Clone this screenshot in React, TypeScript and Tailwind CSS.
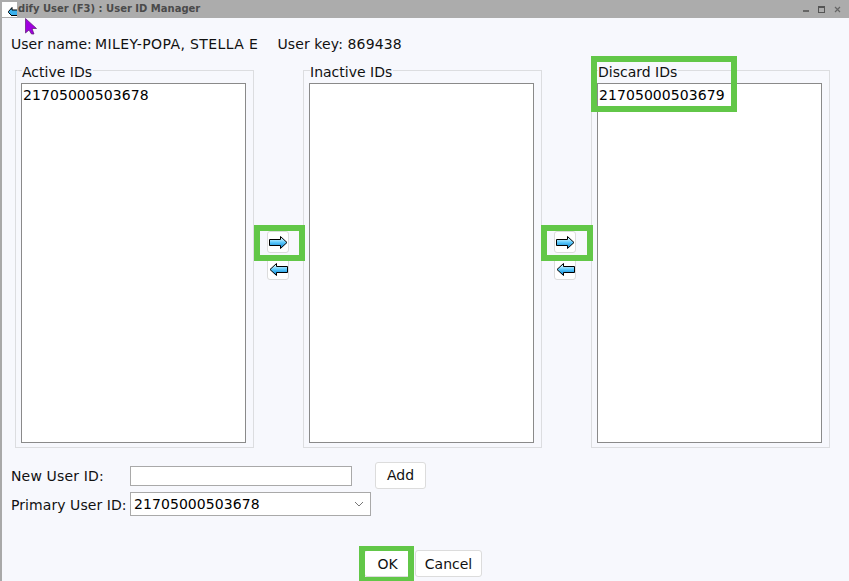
const font = "font-['DejaVu_Sans',sans-serif]";

function Arrow({ left, id }: { left?: boolean; id: string }) {
  return (
    <svg width="19" height="13" viewBox="0 0 19 13" className={left ? "-scale-x-100" : ""}>
      <defs>
        <linearGradient id={id} x1="0" y1="0" x2="0" y2="1">
          <stop offset="0.2" stopColor="#c4f0ff" />
          <stop offset="0.5" stopColor="#5cc8fb" />
          <stop offset="0.85" stopColor="#1a8fd8" />
        </linearGradient>
      </defs>
      <path d="M0.5 3.5H11.5V0.5L18 6.5L11.5 12.5V9.5H0.5Z" fill={`url(#${id})`} stroke="#000" strokeWidth="1" />
    </svg>
  );
}

function MoveButtons({ name, inset }: { name: string; inset: string }) {
  return (
    <div className={`w-[49px] flex flex-col items-start gap-[5px] pt-[167px] ${inset}`}>
      <button className="w-[22px] h-[22px] bg-white border border-[#dcdcdc] rounded-[3px] flex items-center justify-center">
        <Arrow id={`${name}-right`} />
      </button>
      <button className="w-[22px] h-[22px] bg-white border border-[#dcdcdc] rounded-[3px] flex items-center justify-center">
        <Arrow id={`${name}-left`} left />
      </button>
    </div>
  );
}

function IdPanel({ title, ids }: { title: string; ids: string[] }) {
  return (
    <fieldset className="w-[239px] h-[384px] border border-[#dcdde0] px-[5px] m-0 shrink-0">
      <legend className="ml-[1px] pr-[1px] text-[14px] leading-[17px] h-[13px] text-[#111]">{title}</legend>
      <div className="w-[225px] h-[360px] mt-[6px] bg-white border border-[#8a8a8a] px-[1px] pt-[2px] text-[14px] leading-[18px] text-black tracking-[0.07px]">
        {ids.map((id) => (
          <div key={id}>{id}</div>
        ))}
      </div>
    </fieldset>
  );
}

export default function App() {
  return (
    <div className={`${font} relative w-[849px] h-[581px] overflow-hidden flex flex-col bg-[#f7f8fd] text-[14px] text-[#111]`}>
      <div className="h-[18px] shrink-0 bg-[#acacac] flex items-center pl-[18px] pr-[8px]">
        <span className="text-[10px] font-bold text-[#4a4a4a] leading-[18px]">dify User (F3) : User ID Manager</span>
        <div className="ml-auto flex items-center gap-[9px] text-[#555]">
          <span className="w-[6px] h-[2px] bg-[#666] mt-[3px]" />
          <span className="w-[7px] h-[7px] border border-[#555] border-t-2" />
          <svg width="7" height="7" viewBox="0 0 7 7">
            <path d="M1 1L6 6M6 1L1 6" stroke="#666" strokeWidth="1.2" />
          </svg>
        </div>
      </div>

      <div className="flex-1 border-l-2 border-[#a9a9a9] flex flex-col">
        <div className="flex h-[46px] pl-[9px] pt-[17px] leading-[18px] shrink-0">
          <span className="w-[84px]">User name:</span>
          <span className="tracking-[0.4px]">MILEY-POPA, STELLA E</span>
          <span className="ml-[19px] tracking-[0.12px]">User key: 869438</span>
        </div>

        <div className="flex pl-[13px] shrink-0">
          <IdPanel title="Active IDs" ids={["21705000503678"]} />
          <MoveButtons name="a" inset="pl-[13px]" />
          <IdPanel title="Inactive IDs" ids={[]} />
          <MoveButtons name="b" inset="pl-[12px]" />
          <IdPanel title="Discard IDs" ids={["21705000503679"]} />
        </div>

        <div className="flex items-center pl-[9px] mt-[14px] h-[27px]">
          <label className="w-[119px] leading-[18px] tracking-[0.15px]">New User ID:</label>
          <div className="w-[222px] h-[20px] bg-white border border-[#a9a9a9]" />
          <button className="ml-[23px] w-[51px] h-[27px] bg-white border border-[#dcdcdc] rounded-[3px] text-[14px]">Add</button>
        </div>
        <div className="flex items-center pl-[9px] mt-[3px] h-[24px]">
          <label className="w-[119px] leading-[18px] pt-[1px] tracking-[0.07px]">Primary User ID:</label>
          <div className="w-[241px] h-[24px] bg-white border border-[#a9a9a9] flex items-center pl-[3px] pr-[6px] text-black tracking-[0.07px]">
            <span className="pt-[1px]">21705000503678</span>
            <svg className="ml-auto" width="10" height="6" viewBox="0 0 10 6">
              <path d="M1 1L5 5L9 1" fill="none" stroke="#777" strokeWidth="1" />
            </svg>
          </div>
        </div>

        <div className="flex pl-[362px] mt-[34px] gap-[4px]">
          <button className="w-[47px] h-[27px] pt-[1px] bg-white border border-[#dcdcdc] rounded-[3px]">OK</button>
          <button className="w-[67px] h-[27px] pt-[1px] bg-white border border-[#dcdcdc] rounded-[3px]">Cancel</button>
        </div>
      </div>

      {/* window icon + pointer sit over the title bar */}
      <div className="absolute left-[2px] top-[2px] w-[15px] h-[15px] bg-white overflow-hidden">
        <svg className="absolute left-[6px] top-[4px]" width="9" height="11" viewBox="0 0 9 11">
          <path d="M0.5 5.5L4 1.5V4H10V9.5H4V10L0.5 6.5Z" fill="#3ab0ec" stroke="#000" strokeWidth="1" />
        </svg>
      </div>
      <svg className="absolute left-[25px] top-[18px]" width="12" height="17" viewBox="0 0 12 17">
        <path d="M0.5 0.5L11.5 10.5H7L9 16L6.5 16L4 12L0.5 15Z" fill="#a000e0" stroke="#5a1a70" strokeWidth="0.7" />
      </svg>

      {/* green annotation boxes */}
      <div className="absolute left-[254px] top-[225px] w-[51px] h-[36px] border-[6px] border-[#62c748]" />
      <div className="absolute left-[541px] top-[225px] w-[52px] h-[36px] border-[6px] border-[#62c748]" />
      <div className="absolute left-[591px] top-[56px] w-[146px] h-[56px] border-[6px] border-[#62c748]" />
      <div className="absolute left-[359px] top-[546px] w-[55px] h-[35px] border-x-[6px] border-t-[5px] border-b-[4px] border-[#62c748]" />
    </div>
  );
}
